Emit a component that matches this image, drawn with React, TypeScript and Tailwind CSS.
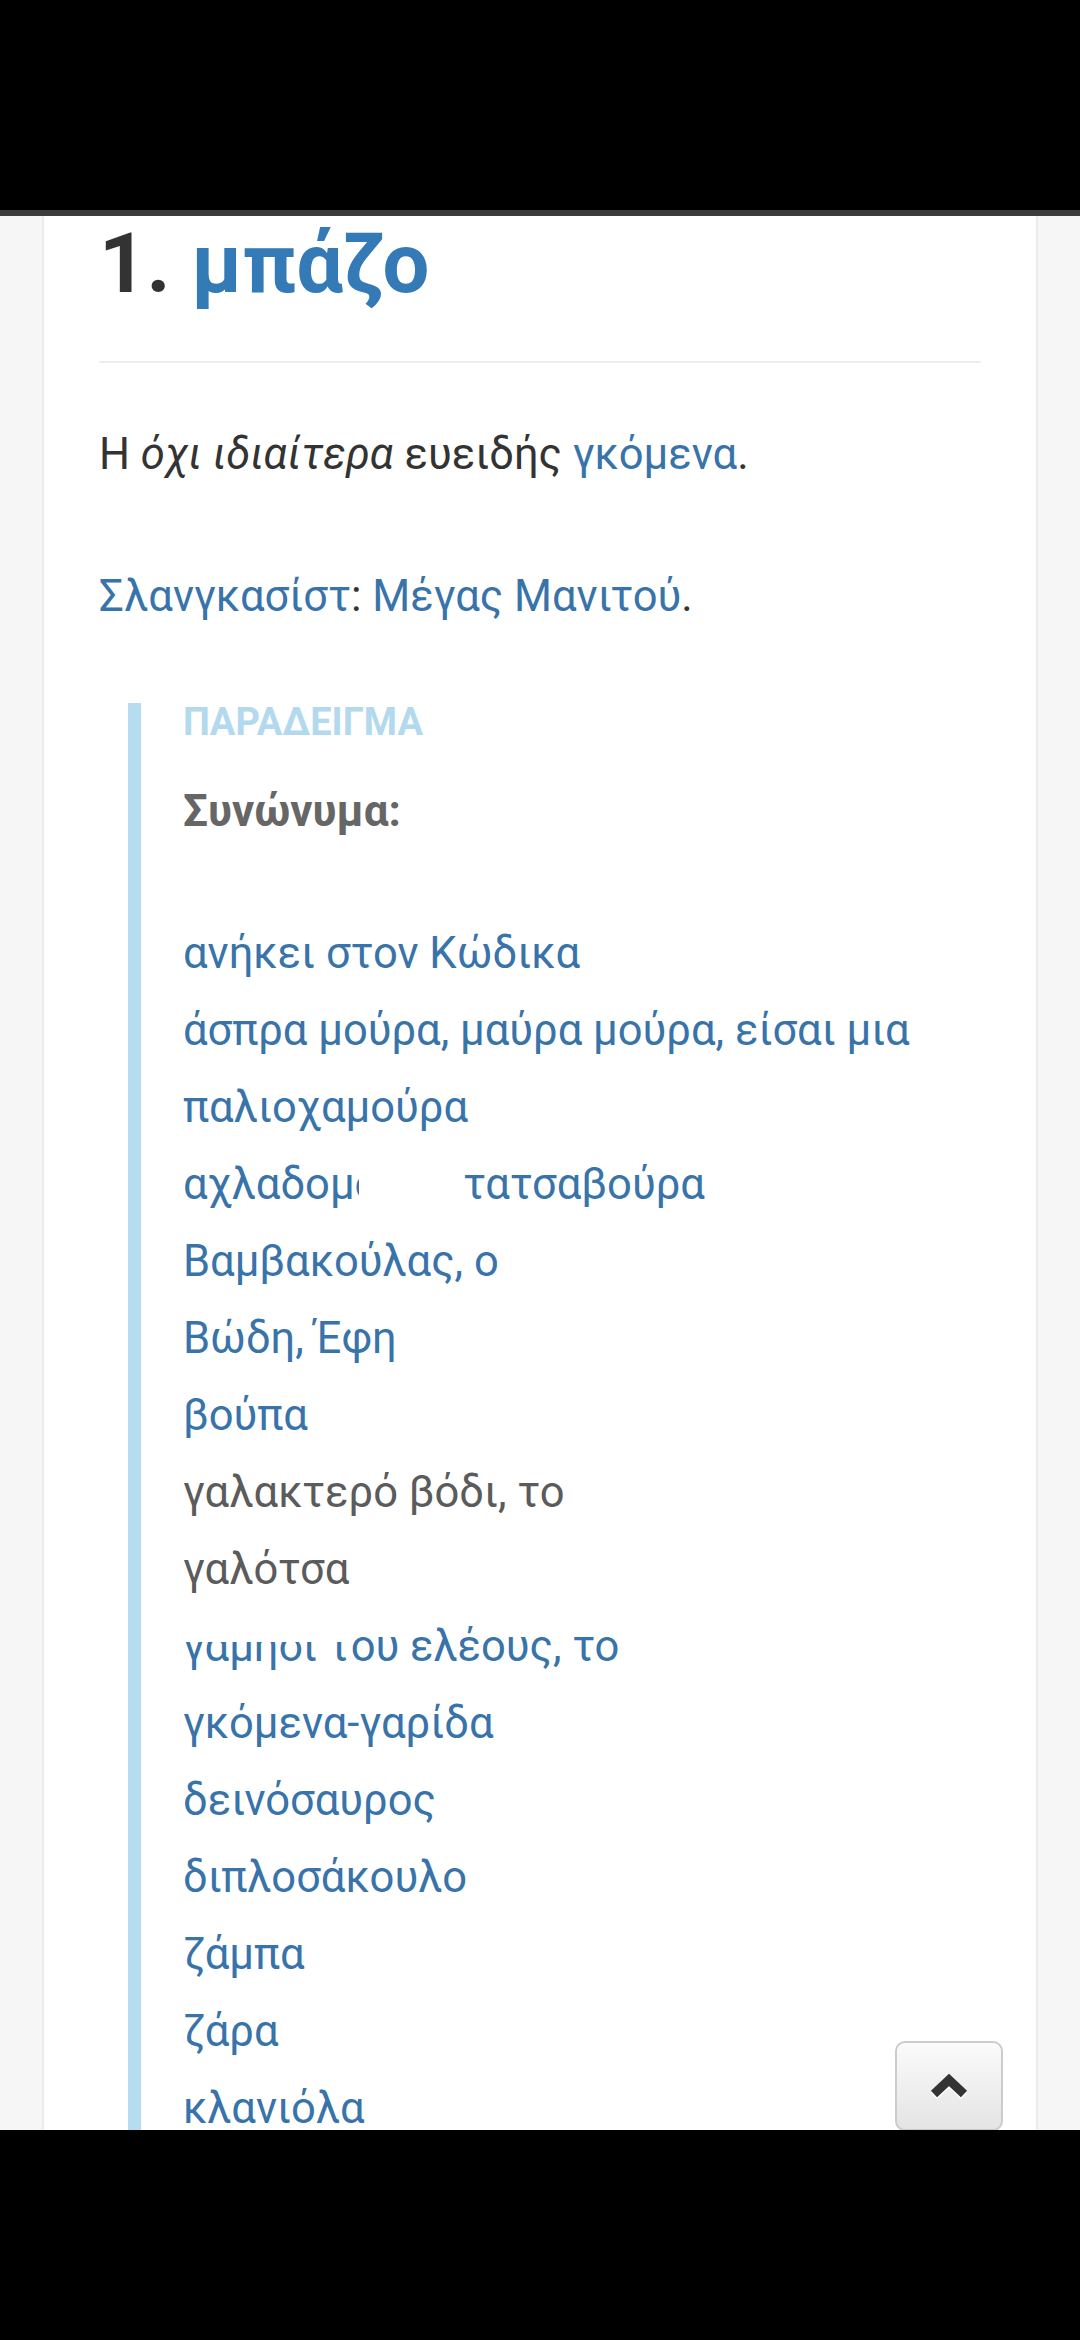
import React from "react";

const LINK = "text-[#3873aa]";

function Item({ children, gray }: { children: React.ReactNode; gray?: boolean }) {
  return <div className={gray ? "text-[#5b5b5b]" : LINK}>{children}</div>;
}

export default function App() {
  return (
    <div
      className="flex h-[2340px] w-[1080px] flex-col overflow-hidden bg-black"
      style={{ fontFamily: "Roboto, 'Noto Sans', sans-serif" }}
    >
      <div className="h-[210px] shrink-0 bg-black" />
      <div className="h-[6px] shrink-0 bg-[#3b3c3e]" />
      <main className="relative flex-1 overflow-hidden bg-[#f6f6f6]">
        <div className="mx-[42px] h-full border-x-2 border-[#ececec] bg-white px-[55px] pt-[6px]">
          <h1 className="text-[83px] font-bold leading-[83px] text-[#333333]">
            1. <span className="text-[#337ab7]">μπάζο</span>
          </h1>
          <div className="mt-[56px] h-[2px] bg-[#eeeeee]" />
          <p className="mt-[53px] text-[43.5px] leading-[77px] text-[#333333]">
            Η <i>όχι ιδιαίτερα</i> ευειδής <span className={LINK}>γκόμενα</span>.
          </p>
          <p className="mt-[65px] text-[43.5px] leading-[77px] text-[#333333]">
            <span className={LINK}>Σλανγκασίστ</span>: <span className={LINK}>Μέγας Μανιτού</span>.
          </p>
          <blockquote className="ml-[29px] mt-[68px] border-l-[13px] border-[#b5dcef] pl-[42px]">
            <div className="text-[38px] font-bold leading-[38px] text-[#b3d9ee]">ΠΑΡΑΔΕΙΓΜΑ</div>
            <div className="mt-[32px] text-[44px] font-bold leading-[77px] text-[#666666]">Συνώνυμα:</div>
            <div className="mt-[65px] text-[43.5px] leading-[77px]">
              <Item>ανήκει στον Κώδικα</Item>
              <Item>
                άσπρα μούρα, μαύρα μούρα, είσαι μια
                <br />
                παλιοχαμούρα
              </Item>
              <Item>
                αχλαδομ
                <span className="relative">
                  ούρα
                  <span className="absolute inset-y-0 left-[4px] right-[-11px] bg-white" />
                </span>{" "}
                τατσαβούρα
              </Item>
              <Item>Βαμβακούλας, ο</Item>
              <Item>Βώδη, Έφη</Item>
              <Item>βούπα</Item>
              <Item gray>γαλακτερό βόδι, το</Item>
              <Item gray>γαλότσα</Item>
              <Item>
                <span className="relative">
                  γαμήσι τ
                  <span className="absolute left-0 right-0 top-0 h-[21px] bg-white" />
                </span>
                ου ελέους, το
              </Item>
              <Item>γκόμενα-γαρίδα</Item>
              <Item>δεινόσαυρος</Item>
              <Item>διπλοσάκουλο</Item>
              <Item>ζάμπα</Item>
              <Item>ζάρα</Item>
              <Item>κλανιόλα</Item>
            </div>
          </blockquote>
        </div>
        <button
          type="button"
          className="absolute bottom-[-1px] right-[77px] flex h-[90px] w-[108px] items-center justify-center rounded-[10px] border-2 border-[#cccccc] bg-gradient-to-b from-[#fbfbfb] to-[#e4e4e4]"
        >
          <svg width="38" height="30" viewBox="0 0 38 30" className="-mt-[2px]">
            <polyline points="4,24 19,10 34,24" fill="none" stroke="#ffffff" strokeWidth="9" strokeLinejoin="miter" transform="translate(0,2)" />
            <polyline points="4,24 19,10 34,24" fill="none" stroke="#333333" strokeWidth="9" strokeLinejoin="miter" />
          </svg>
        </button>
      </main>
      <div className="h-[210px] shrink-0 bg-black" />
    </div>
  );
}
